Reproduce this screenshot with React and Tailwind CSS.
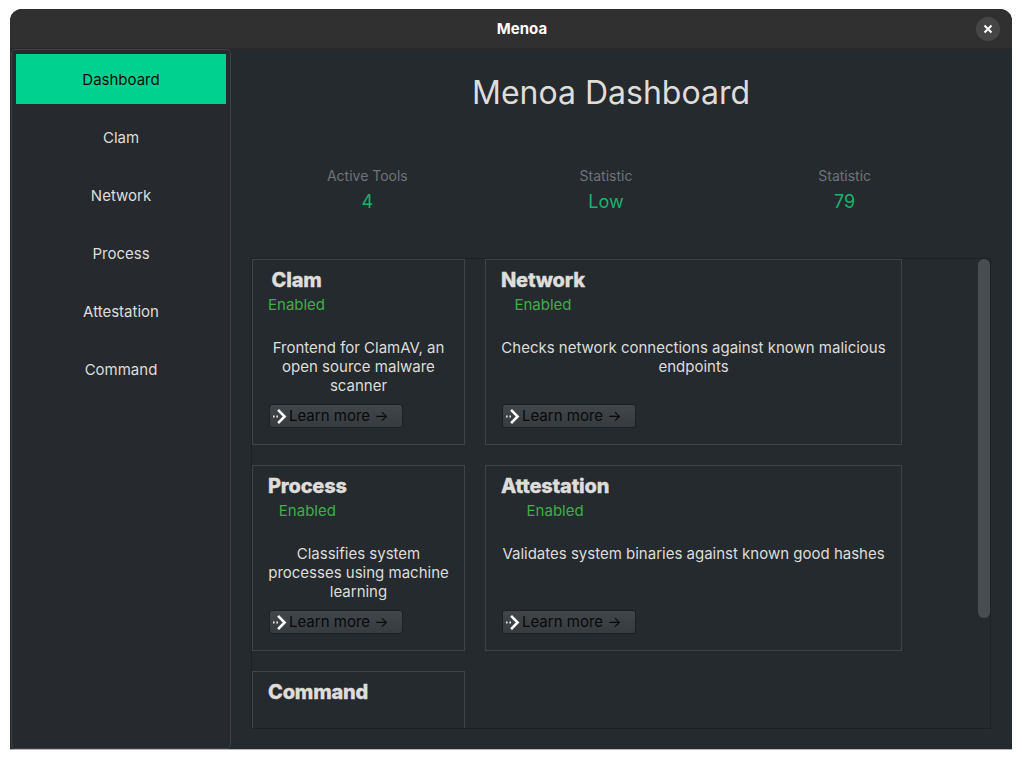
import React from "react";

const nav = ["Dashboard", "Clam", "Network", "Process", "Attestation", "Command"];
const cards = [
  ["Clam", "Frontend for ClamAV, an open source malware scanner"],
  ["Network", "Checks network connections against known malicious endpoints"],
  ["Process", "Classifies system processes using machine learning"],
  ["Attestation", "Validates system binaries against known good hashes"],
];

function ChevronDots() {
  return (
    <svg width="17" height="17" viewBox="0 0 17 17" fill="none" className="shrink-0">
      <path d="M8 2.8 L13.6 8.5 L8 14.2" stroke="#ffffff" strokeWidth="2.6" strokeLinecap="square" />
      <path d="M2 8.5h1.6M5.4 8.5h1.6" stroke="#e8e8e8" strokeWidth="1.8" />
    </svg>
  );
}

function Card({ title, desc }) {
  return (
    <div className="h-[186px] border border-[#3f4448] px-[15px] pt-[7px] flex flex-col">
      <div className="w-fit flex flex-col items-center">
        <h2 className="text-[20px] leading-[26px] font-extrabold tracking-[-0.2px] [-webkit-text-stroke:0.3px_#deddda] text-[#deddda]">{title}</h2>
        {desc && <span className="mt-[2px] text-[15px] leading-[19px] text-[#3fae48]">Enabled</span>}
      </div>
      {desc && (
        <>
          <p className="mt-[24px] h-[57px] text-center text-[15px] leading-[19px] text-[#deddda]">{desc}</p>
          <button className="mt-[9px] ml-[1px] w-[134px] h-[24px] flex items-center pl-[1px] rounded-[3px] border border-[#1d2023] bg-gradient-to-b from-[#41464a] to-[#363b3f] text-[15px] text-[#08090a]">
            <ChevronDots />
            <span className="ml-[1px]">Learn more →</span>
          </button>
        </>
      )}
    </div>
  );
}

export default function App() {
  return (
    <div className="w-[1022px] h-[760px] bg-white pt-[9px] pl-[10px] font-['Inter',sans-serif] overflow-hidden">
      <div className="w-[1002px] h-[741px] flex flex-col rounded-t-[12px] overflow-hidden bg-[#252a2e] border-b border-[#b5b5b5]">
        <header className="relative h-[40px] shrink-0 flex items-center justify-center pl-[22px] pt-[2px] bg-[#303030] border-b border-[#2a2a2a]">
          <span className="text-[15px] font-bold text-white">Menoa</span>
          <button className="absolute right-[12px] top-[8px] w-6 h-6 rounded-full bg-[#464646] flex items-center justify-center">
            <svg width="10" height="10" viewBox="0 0 10 10">
              <path d="M1.5 1.5l7 7M8.5 1.5l-7 7" stroke="#ffffff" strokeWidth="2" />
            </svg>
          </button>
        </header>
        <div className="flex-1 flex min-h-0">
          <aside className="ml-[1px] w-[220px] shrink-0 border border-[#3d4246] rounded-[4px] bg-[#262a2e] pt-[4px] px-[4px] flex flex-col gap-2">
            {nav.map((n, i) => (
              <div
                key={n}
                className={
                  "h-[50px] flex items-center justify-center pt-[3px] text-[15px] " +
                  (i === 0 ? "bg-[#00d18f] text-[#0a0d0c]" : "text-[#deddda]")
                }
              >
                {n}
              </div>
            ))}
          </aside>
          <main className="flex-1 min-w-0 pl-[20px] pr-[21px] flex flex-col">
            <h1 className="mr-[20px] mt-[23px] h-[42px] text-center text-[32px] leading-[42px] font-normal text-[#deddda]">
              Menoa Dashboard
            </h1>
            <section className="-ml-[3px] mt-[52px] w-[716px] grid grid-cols-3 text-center">
              {[
                ["Active Tools", "4"],
                ["Statistic", "Low"],
                ["Statistic", "79"],
              ].map(([label, value], i) => (
                <div key={i} className="flex flex-col items-center">
                  <span className="text-[14px] leading-[20px] text-[#6f7477]">{label}</span>
                  <span className="mt-[4px] text-[18px] leading-[24px] text-[#19b46c]">{value}</span>
                </div>
              ))}
            </section>
            <div className="relative mt-[44px] h-[471px] border border-[#1e2225] overflow-hidden">
              <div className="grid grid-cols-[213px_417px] gap-5">
                {cards.map(([t, d]) => (
                  <Card key={t} title={t} desc={d} />
                ))}
                <Card title="Command" desc="" />
              </div>
              <div className="absolute right-[0px] top-0 w-3 h-[359px] rounded-[6px] bg-[#484d51]" />
            </div>
          </main>
        </div>
      </div>
    </div>
  );
}
